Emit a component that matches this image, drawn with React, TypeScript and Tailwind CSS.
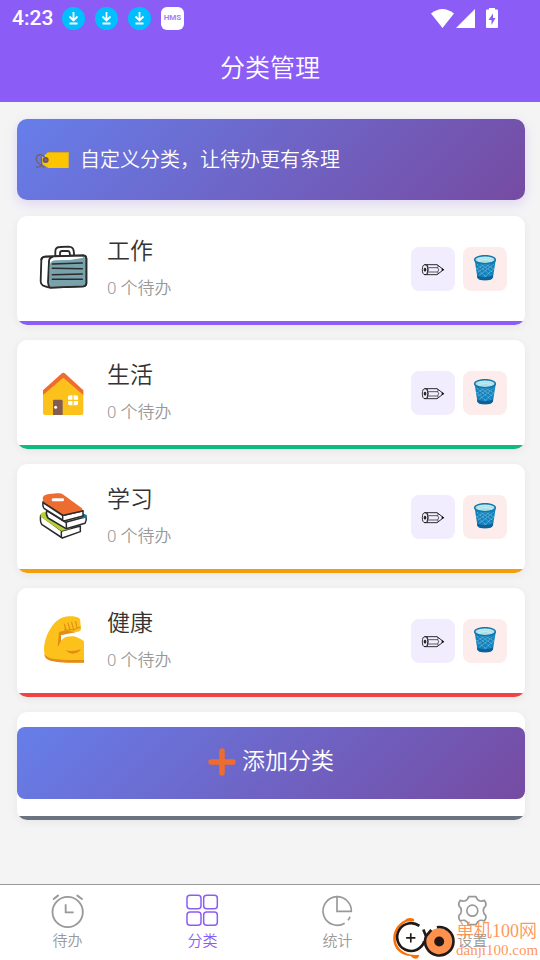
import React, { useState } from "react";

const SuitcaseIcon = () => (
  <svg viewBox="60 48 144 144" className="w-12 h-12 overflow-visible" fill="none" stroke="#2b2b2b" strokeWidth="5.5" strokeLinejoin="round" strokeLinecap="round">
    <path d="M106 82 V66 Q107 54 120 54 L146 53 Q160 54 161 66 L163 80 H150 L149 71 Q148 66 143 66 H127 Q120 66 120 72 V82Z" fill="#fff" />
    <path d="M64 92 Q65 84 75 83 L190 79 Q198 79 199 88 L199 163 Q199 171 190 172 L92 176 Q85 176 78 173 L68 169 Q62 165 62 157Z" fill="#fff" />
    <path d="M90 94 Q91 86 99 85 L188 83 Q196 83 197 90 V162 Q197 169 189 170 L95 173 Q86 173 86 163Z" fill="#78a3ad" stroke="none" />
    <path d="M91 106 Q93 94 108 94 L150 93 L190 86 L187 83 L98 85 Q90 86 90 94Z" fill="#fff" stroke="none" />
    <path d="M64 92 Q65 84 75 83 L190 79 Q198 79 199 88 L199 163 Q199 171 190 172 L92 176" />
    <path d="M97 84 Q87 86 87 98 L84 160 Q84 170 90 175" />
    <path d="M97 105 L187 102 M97 118 L187 119 M97 137 L187 135 M97 151 L187 151" strokeWidth="4.5" />
  </svg>
);

const HouseIcon = () => (
  <svg viewBox="60 60 144 144" className="w-12 h-12 overflow-visible">
    <path d="M69 133 L130 78 L190 133 V192 Q190 198 184 198 H75 Q69 198 69 192Z" fill="#fcc21b" />
    <path d="M69 124 L124 74 Q130 68 136 74 L190 124 V138 L130 86 L69 138Z" fill="#ed6c30" />
    <path d="M99 198 V156 Q99 152 103 152 H124 Q128 152 128 156 V198Z" fill="#855c52" />
    <circle cx="107" cy="175" r="4.5" fill="#fff" />
    <rect x="144" y="139" width="30" height="30" rx="6" fill="#fff" />
    <path d="M159 138 V170 M143 154 H175" stroke="#fcc21b" strokeWidth="3.5" />
  </svg>
);

const BooksIcon = () => (
  <svg viewBox="60 51 144 144" className="w-12 h-12 overflow-visible" stroke="#2b2b2b" strokeWidth="4.5" strokeLinejoin="round" strokeLinecap="round">
    <path d="M62 118 L125 165 L181 150 V167 L127 186 L66 146 Q59 137 62 118Z" fill="#fff" />
    <path d="M62 115 Q64 108 76 108 L140 145 L152 158 L124 165 L62 122Z" fill="#b9ce31" stroke="none" />
    <path d="M80 104 L137 139 L198 122 Q201 132 195 142 L138 158 L84 126 Q77 116 80 104Z" fill="#fff" />
    <path d="M188 112 L200 117 Q203 123 196 126 L186 127Z" fill="#1277a8" stroke="none" />
    <path d="M139 140 V157 M124 167 V184" fill="none" />
    <path d="M70 76 L131 118 L189 104 V120 L132 135 L73 98 Q66 90 70 76Z" fill="#fff" />
    <path d="M68 66 Q70 56 88 54 L112 52 Q124 51 130 56 L186 97 Q190 103 184 107 L138 117 Q131 118 126 114 L70 77Z" fill="#ed6c30" stroke="none" />
    <path d="M69 80 L126 117 Q130 121 127 132 M131 118 L188 105" fill="none" />
    <rect x="95" y="67" width="37" height="9" rx="4" fill="#fff" stroke="none" />
  </svg>
);

const MuscleIcon = () => (
  <svg viewBox="60 51 144 144" className="w-12 h-12 overflow-visible">
    <path d="M72 150 C72 108 100 62 126 53 C143 47 165 47 177 54 Q182 57 181 66 L183 83 Q184 93 174 95 L143 98 Q130 100 122 106 L123 122 C132 108 158 105 174 113 Q183 117 192 124 V187 C160 188 112 189 86 178 Q72 170 72 150Z" fill="#fcc21b" />
    <path d="M73 161 Q78 172 98 176 Q125 181 192 180 V188 C150 189 102 188 86 180 Q73 174 73 161Z" fill="#e58c16" />
    <path d="M136 151 Q158 157 184 147 Q174 161 158 161 Q147 161 136 151Z" fill="#e58c16" />
    <path d="M113 137 L117 96 L137 91 L168 97 L143 101 L123 106 V123 L114 140Z" fill="#e58c16" />
    <path d="M133 72 L138 90 M144 69 L150 89 M155 67 L161 89 M167 65 L171 84 M134 88 L143 91 L151 88 L162 90 L172 84 L180 82" stroke="#e58c16" strokeWidth="3.5" fill="none" strokeLinecap="round" />
  </svg>
);

const PencilIcon = () => (
  <svg viewBox="90 107 84 84" className="w-7 h-7" fill="none" stroke="#111" strokeWidth="2.6" strokeLinejoin="round">
    <path d="M107 136 H144 L164 151 L144 166 H107" />
    <ellipse cx="108" cy="151" rx="8" ry="15" />
    <ellipse cx="108" cy="151" rx="2.5" ry="5" fill="#111" />
    <path d="M115 136 Q121 151 115 166 M118 145 H146 M118 158 H146 M144 136 Q151 140 146 145 Q152 151 146 158 Q151 162 144 166" strokeWidth="2" />
    <path d="M158 146 L166 151 L158 156Z" fill="#111" stroke="none" />
  </svg>
);

const TrashIcon = () => (
  <svg viewBox="245 106 84 84" className="w-7 h-7">
    <path d="M256 122 L264 173 Q267 182 287 182 Q308 182 311 173 L319 122Z" fill="#1482bd" />
    <path d="M263 134 L306 168 M261 146 L294 175 M270 131 L309 157 M284 131 L313 148 M313 134 L268 168 M315 146 L282 175 M305 131 L266 157 M291 131 L263 148" stroke="#8fcbe4" strokeWidth="2" strokeDasharray="4 2" />
    <path d="M263 167 Q287 179 311 167 L310 174 Q307 182 287 182 Q267 182 264 174Z" fill="#0d5f99" />
    <ellipse cx="287" cy="120" rx="31" ry="12" fill="#a9e0e6" stroke="#1477ad" strokeWidth="4.5" />
    <path d="M266 118 Q287 108 309 118 M268 124 Q287 115 307 124" stroke="#e4f8fa" strokeWidth="2.5" strokeDasharray="4 2" fill="none" />
  </svg>
);

const TagIcon = () => (
  <svg viewBox="103 123 102 54" className="w-[34px] h-[18px] shrink-0">
    <path d="M123 143 L143 126 H204 V174 H143 L123 161Z" fill="#fdc400" />
    <path d="M143 126 H204 V129 H140Z" fill="#d9a928" />
    <circle cx="135" cy="150" r="9" fill="#6b5964" />
    <circle cx="135" cy="150" r="3" fill="#8174a0" />
    <path d="M133 143 C124 129 106 132 107 148 C108 161 121 166 131 172 M106 170 Q118 175 123 163 L122 140" stroke="#6d6375" strokeWidth="4" fill="none" />
  </svg>
);

const PlusIcon = () => (
  <svg viewBox="0 0 28 28" className="w-7 h-7">
    <path d="M14 3 V25 M3 14 H25" stroke="#ed6c30" strokeWidth="5.5" strokeLinecap="round" />
  </svg>
);

const DownloadIcon = () => (
  <svg viewBox="0 0 23 23" className="w-[23px] h-[23px]">
    <circle cx="11.5" cy="11.5" r="11.5" fill="#00bfff" />
    <path d="M11.5 5 V12.5 M7.500 9.500 L11.500 13.500 L15.500 9.500 M7.500 16.500 H15.500" stroke="#fff" strokeWidth="1.8" fill="none" />
  </svg>
);

const ClockIcon = () => (
  <svg viewBox="148 40 108 108" className="w-9 h-9" fill="none" stroke="currentColor" strokeWidth="5.5">
    <circle cx="201" cy="97" r="45.5" />
    <path d="M195 74 V98 H219" />
    <path d="M159 58 L172 48 M230 48 L244 58" strokeWidth="6" strokeLinecap="round" />
  </svg>
);

const GridIcon = () => (
  <svg viewBox="554 40 108 108" className="w-9 h-9" fill="none" stroke="currentColor" strokeWidth="4.5">
    <rect x="560" y="47" width="42" height="40" rx="9" />
    <rect x="610" y="47" width="41" height="40" rx="9" />
    <rect x="560" y="97" width="42" height="40" rx="9" />
    <rect x="610" y="97" width="41" height="40" rx="9" />
  </svg>
);

const ChartIcon = () => (
  <svg viewBox="148 40 108 108" className="w-9 h-9" fill="none" stroke="currentColor" strokeWidth="5">
    <path d="M199 95 V51 A43 43 0 0 1 242 95 Z" />
    <path d="M199 51 A43 43 0 1 0 222 131" />
    <path d="M232 122 Q236 117 238 111" />
  </svg>
);

const GearIcon = () => (
  <svg viewBox="554 40 108 108" className="w-9 h-9" fill="none" stroke="currentColor" strokeWidth="5" strokeLinejoin="round">
    <path d="M595 51 H617 Q620 61 629 64 Q637 65 642 62 Q649 71 646 79 Q639 84 639 93 Q639 102 646 107 Q649 116 642 124 Q637 121 629 122 Q620 126 617 135 H595 Q592 126 583 122 Q575 121 570 124 Q563 116 566 107 Q573 102 573 93 Q573 84 566 79 Q563 71 570 62 Q575 65 583 64 Q592 61 595 51Z" />
    <circle cx="606" cy="93" r="16.5" />
  </svg>
);

const categories = [
  { name: "工作", count: 0, bar: "bg-[#8b5cf6]", icon: <SuitcaseIcon /> },
  { name: "生活", count: 0, bar: "bg-[#10b981]", icon: <HouseIcon /> },
  { name: "学习", count: 0, bar: "bg-[#f59e0b]", icon: <BooksIcon /> },
  { name: "健康", count: 0, bar: "bg-[#ef4444]", icon: <MuscleIcon /> },
];

const tabs = [
  { label: "待办", icon: <ClockIcon /> },
  { label: "分类", icon: <GridIcon /> },
  { label: "统计", icon: <ChartIcon /> },
  { label: "设置", icon: <GearIcon /> },
];

const StatusBar = () => (
  <div className="flex items-center justify-between h-9 pl-3 pr-[42px]">
    <div className="flex items-center gap-[10px]">
      <span className="w-10 text-[21px] leading-6 font-medium">4:23</span>
      <DownloadIcon />
      <DownloadIcon />
      <DownloadIcon />
      <span className="flex items-center justify-center w-[23px] h-[23px] rounded-md bg-white text-[#a184ee] text-[8px] font-bold">HMS</span>
    </div>
    <svg viewBox="431 7 67 21" className="w-[67px] h-[21px]" fill="#fff">
      <path d="M431 12.500 Q442.500 3.500 454 12.500 L442.500 27Z" />
      <path d="M475 8 V27 H456Z" />
      <path d="M489 8.500 V7 H495 V8.500 H497 Q498 8.500 498 9.500 V26 Q498 27 497 27 H487 Q486 27 486 26 V9.500 Q486 8.500 487 8.500Z" />
      <path d="M493 12.500 L488.500 19 H491.500 V24 L495.500 17 H493Z" fill="#8b5cf6" />
    </svg>
  </div>
);

const Watermark = () => (
  <div className="absolute right-[2px] bottom-0 flex items-end pointer-events-none">
    <svg viewBox="362 112 192 130" className="w-16 h-[43px]" fill="none">
      <path d="M428 118 Q410 110 400 122 C372 136 360 165 367 192 C374 216 394 228 418 230 Q428 243 440 236 L444 226 C410 230 384 216 375 192 C367 166 379 138 406 126 L428 125Z" fill="#ff6f00" />
      <circle cx="418" cy="175" r="41" fill="#fff" />
      <path d="M444 139 A42 42 0 1 0 459 185" stroke="#231815" strokeWidth="8" />
      <path d="M404 175 H432 M418 161 V189" stroke="#231815" strokeWidth="5" />
      <circle cx="504" cy="186" r="40" fill="#ff914d" />
      <path d="M497 143 A43 43 0 1 1 464 170 L456 150 M465 169 L480 151" stroke="#231815" strokeWidth="8" />
      <circle cx="504" cy="186" r="15" fill="#231815" />
    </svg>
    <div className="w-[82px] pb-px text-[#ff8a45]/90 font-['Liberation_Serif','Noto_Sans_CJK_SC',serif] whitespace-nowrap">
      <div className="text-[18px] leading-5">单机100网</div>
      <div className="text-[15px] leading-[18px]">danji100.com</div>
    </div>
  </div>
);

const App = () => {
  const [active, setActive] = useState("分类");

  return (
    <div className="flex flex-col min-h-screen bg-[#f4f4f4] font-[Roboto,'Noto_Sans_CJK_SC',sans-serif] font-[350]">
      <header className="bg-[#8b5cf6] text-white">
        <StatusBar />
        <h1 className="text-[25px] leading-[66px] text-center font-[350]">分类管理</h1>
      </header>

      <main className="flex-1 pl-[17px] pr-[15px] pt-[17px] pb-16">
        <div className="flex items-center gap-[11px] h-[81px] px-[18px] rounded-[10px] text-white bg-[linear-gradient(135deg,#667eea,#764ba2)] shadow-[0_4px_12px_rgba(139,92,246,0.2)]">
          <TagIcon />
          <p className="text-xl leading-7">自定义分类，让待办更有条理</p>
        </div>

        <ul className="flex flex-col gap-[15px] mt-4">
          {categories.map((item) => (
            <li key={item.name} className="rounded-[10px] overflow-hidden bg-white shadow-[0_2px_10px_rgba(0,0,0,0.06)]">
              <div className="flex items-center h-[105px] pl-[23px] pr-[18px]">
                {item.icon}
                <div className="flex-1 ml-[19px] pb-[2px]">
                  <h2 className="text-[23px] leading-8 text-[#333] font-[350]">{item.name}</h2>
                  <p className="mt-2 text-[17px] leading-6 text-[#999]">{item.count} 个待办</p>
                </div>
                <div className="flex gap-2">
                  <button aria-label={`编辑${item.name}`} className="flex items-center justify-center w-11 h-11 rounded-lg bg-[#f2edfe]">
                    <PencilIcon />
                  </button>
                  <button aria-label={`删除${item.name}`} className="flex items-center justify-center w-11 h-11 rounded-lg bg-[#fdecec]">
                    <TrashIcon />
                  </button>
                </div>
              </div>
              <div className={`h-1 ${item.bar}`} />
            </li>
          ))}
          <li className="rounded-[10px] overflow-hidden bg-white shadow-[0_2px_10px_rgba(0,0,0,0.06)]">
            <div className="h-[104px]" />
            <div className="h-1 bg-[#6b7280]" />
          </li>
        </ul>
      </main>

      {/* floats over the list, above the tab bar */}
      <button className="fixed left-[17px] right-[15px] bottom-[161px] flex items-center justify-center gap-[6px] h-[72px] pb-[2px] rounded-lg text-white text-[23px] bg-[linear-gradient(135deg,#667eea,#764ba2)]">
        <PlusIcon />
        添加分类
      </button>

      <nav className="relative grid grid-cols-4 h-[76px] pt-2 bg-white border-t border-[#999]">
        {tabs.map((tab) => (
          <button
            key={tab.label}
            onClick={() => setActive(tab.label)}
            className={`flex flex-col items-center text-[15px] leading-6 ${active === tab.label ? "text-[#8b5cf6]" : "text-[#999]"}`}
          >
            {tab.icon}
            {tab.label}
          </button>
        ))}
        <Watermark />
      </nav>
    </div>
  );
};

export default App;
